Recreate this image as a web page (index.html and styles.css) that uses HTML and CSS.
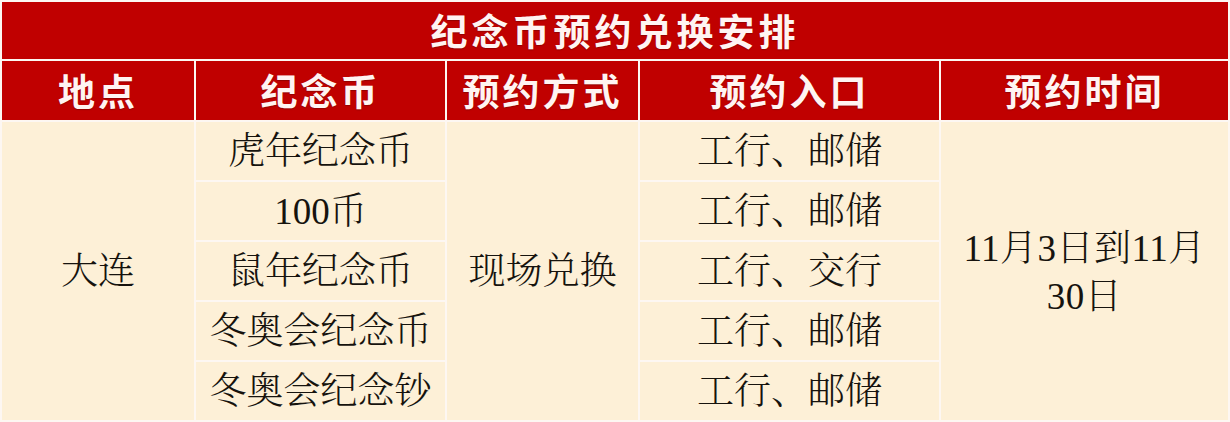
FILE: index.html
```html
<!DOCTYPE html>
<html lang="zh-CN">
<head>
<meta charset="utf-8">
<title>纪念币预约兑换安排</title>
<link rel="stylesheet" href="styles.css">
</head>
<body>
<table class="sched">
  <colgroup>
    <col class="c1"><col class="c2"><col class="c3"><col class="c4"><col class="c5">
  </colgroup>
  <tr class="r-title"><th class="title" colspan="5">纪念币预约兑换安排</th></tr>
  <tr class="r-head">
    <th class="head">地点</th>
    <th class="head">纪念币</th>
    <th class="head">预约方式</th>
    <th class="head">预约入口</th>
    <th class="head">预约时间</th>
  </tr>
  <tr class="r-body">
    <td rowspan="5">大连</td>
    <td>虎年纪念币</td>
    <td rowspan="5">现场兑换</td>
    <td>工行、邮储</td>
    <td rowspan="5" class="time">11月3日到11月<br>30日</td>
  </tr>
  <tr class="r-body"><td>100币</td><td>工行、邮储</td></tr>
  <tr class="r-body"><td>鼠年纪念币</td><td>工行、交行</td></tr>
  <tr class="r-body"><td>冬奥会纪念币</td><td>工行、邮储</td></tr>
  <tr class="r-body"><td>冬奥会纪念钞</td><td>工行、邮储</td></tr>
</table>
</body>
</html>
```

FILE: styles.css
```css
html, body {
  margin: 0;
  padding: 0;
  background: #ffffff;
}

.sched {
  width: 1230px;
  table-layout: fixed;
  border-collapse: separate;
  border-spacing: 2px;
  background: #fdf7f2;
  font-family: "Liberation Serif", "Noto Serif CJK SC", "Noto Sans CJK SC", serif;
  font-size: 37px;
  color: #16130e;
}

.c1 { width: 192px; }
.c2 { width: 249px; }
.c3 { width: 191px; }
.c4 { width: 299px; }
.c5 { width: 287px; }

.sched th,
.sched td {
  padding: 0;
  text-align: center;
  vertical-align: middle;
  line-height: 1;
}

.r-title { height: 57px; }
.r-head { height: 59px; }
.r-body { height: 58px; }

.title,
.head {
  background: #c00000;
  color: #fff4f2;
  font-family: "Noto Sans CJK SC", sans-serif;
  font-weight: 700;
  text-shadow: 0 1px 1px rgba(90, 0, 0, 0.45);
}

.title {
  letter-spacing: 4px;
  padding-left: 4px;
}

.head {
  letter-spacing: 3px;
  padding-left: 3px;
}

.sched td {
  background: #fdf0d7;
  font-weight: 300;
}

.sched td.time {
  line-height: 48px;
  padding-top: 4px;
  letter-spacing: 0.5px;
}
```
